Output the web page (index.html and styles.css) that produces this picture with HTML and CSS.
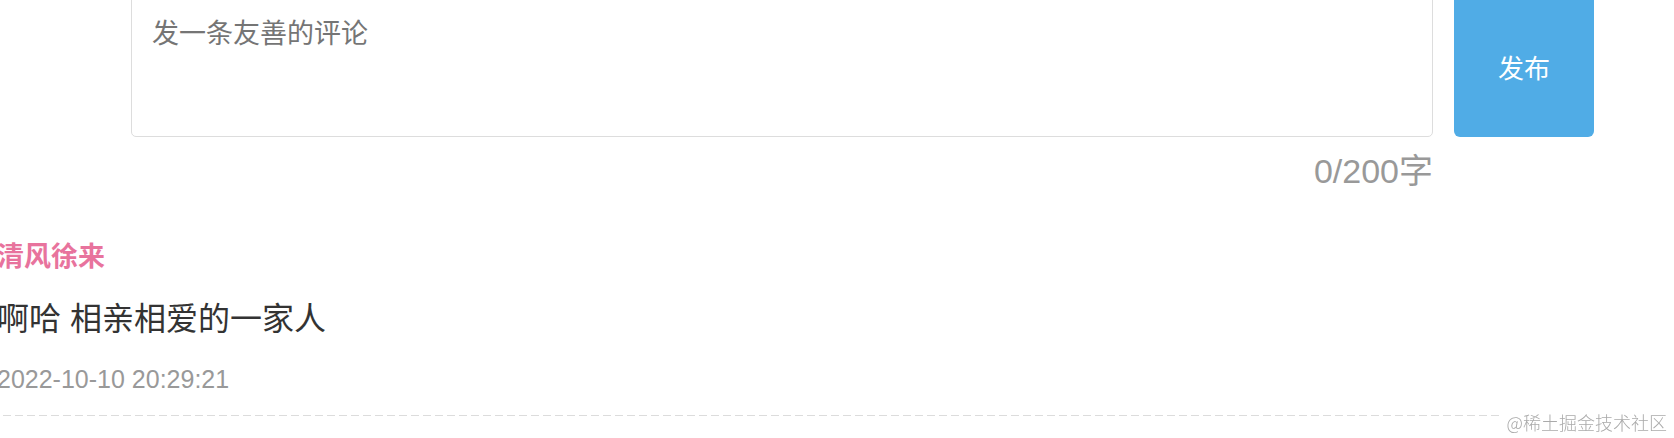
FILE: index.html
```html
<!DOCTYPE html>
<html lang="zh-CN">
<head>
    <meta charset="UTF-8">
    <meta name="viewport" content="width=device-width, initial-scale=1.0">
    <title>评论</title>
    <link rel="stylesheet" href="styles.css">
</head>
<body>
    <div class="comment-section">
        <div class="reply-box">
            <div class="editor">
                <textarea class="reply-input" placeholder="发一条友善的评论" maxlength="200"></textarea>
                <div class="word-count">0/200字</div>
            </div>
            <button class="publish-btn" type="button">发布</button>
        </div>

        <ul class="comment-list">
            <li class="comment-item">
                <div class="comment-user">清风徐来</div>
                <div class="comment-content">啊哈 相亲相爱的一家人</div>
                <div class="comment-time">2022-10-10 20:29:21</div>
            </li>
        </ul>
    </div>
    <div class="watermark">@稀土掘金技术社区</div>
</body>
</html>
```

FILE: styles.css
```css
body {
    font-family: "Liberation Sans", "Noto Sans CJK SC", sans-serif;
    background-color: #fff;
    margin: 0;
    padding: 0;
    overflow: hidden;
}
.comment-section {
    width: 1597px;
    margin-left: -3px;
}
.reply-box {
    display: flex;
    gap: 21px;
    margin-top: -5px;
    margin-left: 134px;
}
.editor {
    display: flex;
    flex-direction: column;
}
.reply-input {
    box-sizing: border-box;
    width: 1302px;
    height: 142px;
    padding: 19px 20px;
    font-family: "Liberation Sans", "Noto Sans CJK SC", sans-serif;
    font-size: 27px;
    line-height: 39px;
    color: #333;
    border: 1px solid #ddd;
    border-radius: 5px;
    resize: none;
    outline: none;
}
.reply-input::placeholder {
    color: #757575;
}
.word-count {
    margin-top: 14px;
    font-size: 34px;
    line-height: 40px;
    color: #999;
    text-align: right;
}
.publish-btn {
    width: 140px;
    height: 142px;
    padding: 0;
    background-color: #50ace6;
    color: #fff;
    border: none;
    border-radius: 6px;
    font-family: "Liberation Sans", "Noto Sans CJK SC", sans-serif;
    font-size: 26px;
    cursor: pointer;
}
.comment-list {
    list-style: none;
    margin: 48px 0 0;
    padding: 0;
}
.comment-item {
    background-image: repeating-linear-gradient(to right, #dcdcdc 0 8px, transparent 8px 12px);
    background-size: 100% 1px;
    background-position: 6px bottom;
    background-repeat: no-repeat;
    padding-bottom: 20px;
}
.comment-user {
    font-size: 27px;
    line-height: 36px;
    font-weight: bold;
    color: #e8739d;
}
.comment-content {
    margin-top: 22px;
    font-size: 32px;
    line-height: 44px;
    color: #333;
}
.comment-time {
    margin-top: 21px;
    font-size: 25px;
    line-height: 34px;
    color: #999;
}
.watermark {
    position: fixed;
    right: 7px;
    bottom: 6px;
    padding-left: 4px;
    background: #fff;
    font-family: "Noto Sans CJK SC", sans-serif;
    font-size: 18px;
    font-weight: 300;
    line-height: 20px;
    color: #aaa;
}
```
